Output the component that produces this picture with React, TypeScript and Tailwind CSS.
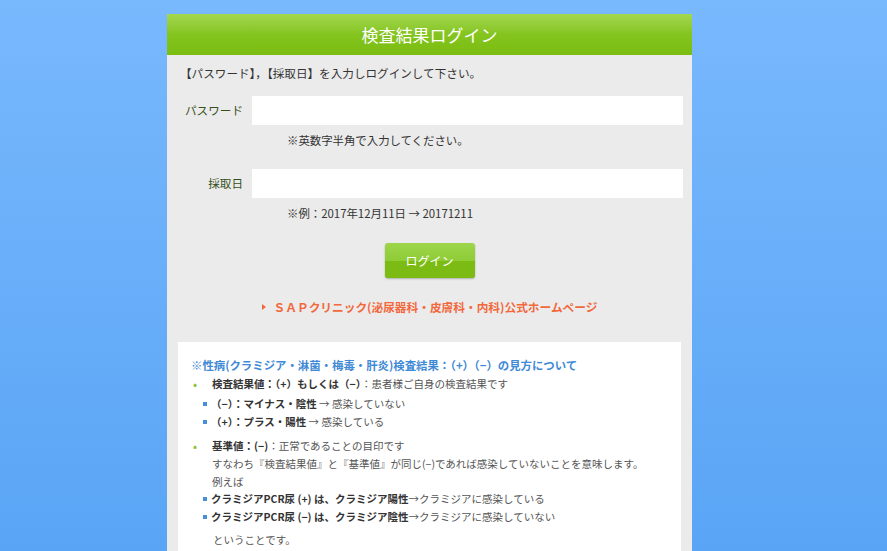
const font = "font-['Noto_Sans_CJK_JP','Noto_Sans',sans-serif]";

const Bullet = ({ children }: { children: React.ReactNode }) => (
  <li className="flex items-start">
    <span className="w-[21px] shrink-0 pl-[2px] text-[#8cc63f] text-[12px] leading-[18px]">•</span>
    <div className="leading-[18px]">{children}</div>
  </li>
);

const Sub = ({ children }: { children: React.ReactNode }) => (
  <li className="flex items-center h-[18px]">
    <span className="ml-[12px] mr-[4px] w-[4px] h-[4px] bg-[#4a8fd6] shrink-0" />
    <span>{children}</span>
  </li>
);

const App = () => {
  return (
    <div className={`min-h-[551px] bg-gradient-to-b from-[#78b8fd] to-[#58a4f5] flex justify-start pl-[167px] pt-[14px] ${font}`}>
      <div className="w-[525px] bg-[#ebebeb]">
        <div className="h-[41px] bg-gradient-to-b from-[#a3d74d] via-[#84c41e] via-50% to-[#7abd10] flex items-center justify-center text-white text-[17px]">
          検査結果ログイン
        </div>

        <div className="pl-[13px] pr-[9px] pt-[10px] text-[#333] text-[11.4px]">
          <p className="leading-[16px] text-[11.6px]">【パスワード】，【採取日】を入力しログインして下さい。</p>

          <div className="flex items-center mt-[15px]">
            <label className="w-[64px] pr-[1px] text-right text-[11.6px] text-[#36501c]">パスワード</label>
            <input type="password" className="ml-[8px] flex-1 h-[29px] bg-white outline-none px-2" />
          </div>
          <p className="pl-[107px] mt-[8px] leading-[15px]">※英数字半角で入力してください。</p>

          <div className="flex items-center mt-[21px]">
            <label className="w-[64px] pr-[1px] text-right text-[11.6px] text-[#36501c]">採取日</label>
            <input type="text" className="ml-[8px] flex-1 h-[29px] bg-white outline-none px-2" />
          </div>
          <p className="pl-[107px] mt-[8px] leading-[15px]">※例：2017年12月11日 → 20171211</p>

          <div className="flex justify-center mt-[22px] pr-[4px]">
            <button className="w-[90px] h-[35px] rounded-[3px] bg-gradient-to-b from-[#9dd54b] via-[#8fcc36] via-50% to-[#7ab912] shadow-[0_1px_2px_rgba(0,0,0,0.25)] text-white text-[12px] relative overflow-hidden">
              <span className="absolute left-0 right-0 top-1/2 bottom-0 bg-[#7cbb14]" />
              <span className="relative">ログイン</span>
            </button>
          </div>

          <div className="flex justify-center items-center mt-[21px] pr-[4px] text-[#f2683b] text-[11.7px] font-bold leading-[16px]">
            <span className="w-0 h-0 border-y-[3.5px] border-y-transparent border-l-[4px] border-l-[#f2683b] mr-[8px]" />
            <span>ＳＡＰクリニック(泌尿器科・皮膚科・内科)公式ホームページ</span>
          </div>
        </div>

        <div className="mx-[11px] mt-[27px] bg-white pl-[13px] pr-[10px] pt-[14px] pb-[20px] text-[10.5px] text-[#555]">
          <p className="text-[#3f8ad6] font-bold text-[11.4px] leading-[18px]">
            ※性病(クラミジア・淋菌・梅毒・肝炎)検査結果：（+）（−）の見方について
          </p>
          <ul className="mt-[1px]">
            <Bullet>
              <b className="text-[#333]">検査結果値：（+）もしくは（−）</b>：患者様ご自身の検査結果です
            </Bullet>
          </ul>
          <ul className="mt-[2px]">
            <Sub>
              <b className="text-[#333]">（−）：マイナス・陰性</b> → 感染していない
            </Sub>
            <Sub>
              <b className="text-[#333]">（+）：プラス・陽性</b> → 感染している
            </Sub>
          </ul>
          <ul className="mt-[6px]">
            <Bullet>
              <b className="text-[#333]">基準値：(−)</b>：正常であることの目印です
              <br />
              すなわち『検査結果値』と『基準値』が同じ(−)であれば感染していないことを意味します。
              <br />
              例えば
            </Bullet>
          </ul>
          <ul className="-mt-[1px]">
            <Sub>
              <b className="text-[#333]">クラミジアPCR尿 (+) は、クラミジア陽性</b>→クラミジアに感染している
            </Sub>
            <Sub>
              <b className="text-[#333]">クラミジアPCR尿 (−) は、クラミジア陰性</b>→クラミジアに感染していない
            </Sub>
          </ul>
          <p className="pl-[22px] mt-[5px] leading-[18px]">ということです。</p>
        </div>
      </div>
    </div>
  );
};

export default App;
